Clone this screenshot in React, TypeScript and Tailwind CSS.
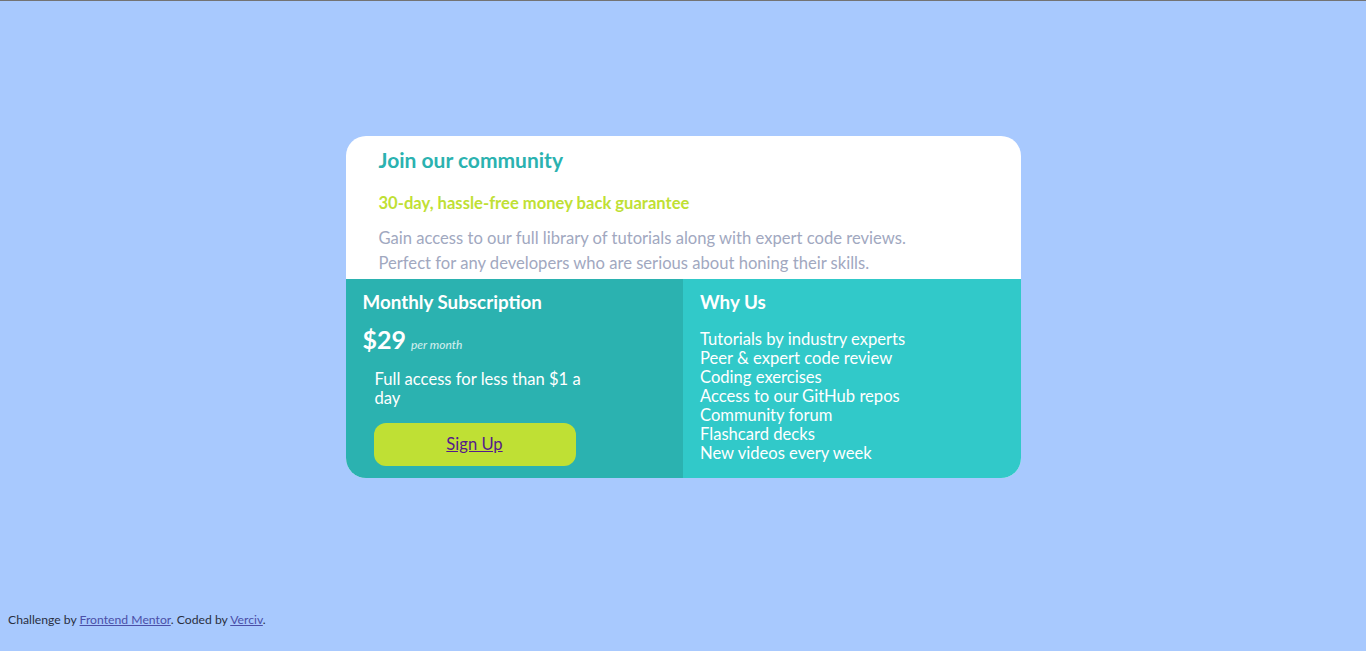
export default function App() {
  const reasons = [
    "Tutorials by industry experts",
    "Peer & expert code review",
    "Coding exercises",
    "Access to our GitHub repos",
    "Community forum",
    "Flashcard decks",
    "New videos every week",
  ];

  return (
    <div className="min-h-screen flex flex-col bg-[#a8c9fe] border-t border-[#737373] font-['Lato',sans-serif]">
      <main className="flex-1 flex justify-center pt-[135px]">
        <div className="w-[675px] h-[342px] flex flex-col rounded-[20px] overflow-hidden bg-white">
          <section className="h-[143px] px-[33px] pt-[12px]">
            <h1 className="text-[21px] leading-[24px] font-bold text-[#2bb2b0]">Join our community</h1>
            <h2 className="mt-[21px] text-[16.6px] leading-[20px] font-bold text-[#bfe034]">
              30-day, hassle-free money back guarantee
            </h2>
            <p className="mt-[13px] text-[16.6px] leading-[25px] text-[#a1a8bf]">
              Gain access to our full library of tutorials along with expert code reviews.
              <br />
              Perfect for any developers who are serious about honing their skills.
            </p>
          </section>

          <div className="flex-1 grid grid-cols-2">
            <section className="bg-[#2bb2b0] text-white pl-[17px] pt-[12px]">
              <h3 className="text-[18.8px] leading-[22px] font-bold">Monthly Subscription</h3>
              <div className="mt-[11px] flex items-baseline gap-[5px]">
                <span className="text-[25px] leading-[30px] font-bold">$29</span>
                <span className="text-[12px] italic text-white/80">per month</span>
              </div>
              <p className="mt-[16px] ml-[12px] w-[225px] text-[16.6px] leading-[19px]">
                Full access for less than $1 a day
              </p>
              <a
                href="#"
                className="mt-[15px] ml-[11px] w-[202px] h-[43px] flex items-center justify-center rounded-[12px] bg-[#bfe034] text-[16.6px] text-[#551a8b] underline"
              >
                Sign Up
              </a>
            </section>
            <section className="bg-[#31c9c9] text-white pl-[17px] pt-[12px]">
              <h3 className="text-[18.8px] leading-[22px] font-bold">Why Us</h3>
              <ul className="mt-[17px] text-[16.6px] leading-[19px]">
                {reasons.map((r) => (
                  <li key={r}>{r}</li>
                ))}
              </ul>
            </section>
          </div>
        </div>
      </main>

      <footer className="px-[8px] pb-[24px] text-[12.2px] leading-[14px] text-[#2a2f3f]">
        Challenge by{" "}
        <a href="#" className="text-[#4b4fa8] underline">
          Frontend Mentor
        </a>
        . Coded by{" "}
        <a href="#" className="text-[#4b4fa8] underline">
          Verciv
        </a>
        .
      </footer>
    </div>
  );
}
